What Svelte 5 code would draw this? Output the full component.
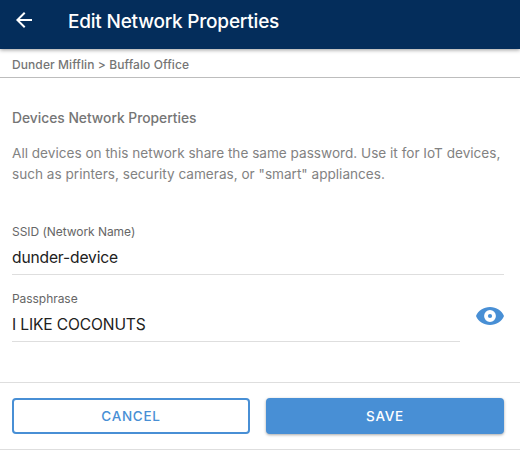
<script>
  let ssid = $state('dunder-device');
  let passphrase = $state('I LIKE COCONUTS');
  let visible = $state(true);
</script>

<div class="page">
  <header>
    <button class="back" aria-label="Back">
      <svg width="24" height="24" viewBox="0 0 24 24"><path fill="#fff" d="M20 11H7.83l5.59-5.59L12 4l-8 8 8 8 1.41-1.41L7.83 13H20v-2z" /></svg>
    </button>
    <h1>Edit Network Properties</h1>
  </header>
  <nav><span>Dunder Mifflin &gt; Buffalo Office</span></nav>
  <main>
    <h2>Devices Network Properties</h2>
    <p>All devices on this network share the same password. Use it for IoT devices,<br />such as printers, security cameras, or "smart" appliances.</p>
    <label class="field">
      <span class="lab">SSID (Network Name)</span>
      <input bind:value={ssid} spellcheck="false" />
    </label>
    <div class="row">
      <label class="field">
        <span class="lab">Passphrase</span>
        <input type={visible ? 'text' : 'password'} bind:value={passphrase} spellcheck="false" />
      </label>
      <button class="eye" aria-label="Toggle passphrase" onclick={() => (visible = !visible)}>
        <svg width="28" height="18" viewBox="0 0 28 18">
          <path fill="#488fd5" fill-rule="evenodd" d="M14 0C7.6 0 2.2 3.7 0 9c2.2 5.300 7.600 9 14 9s11.800-3.700 14-9C25.800 3.700 20.400 0 14 0zM14 3.100a5.900 5.900 0 1 1 0 11.800a5.900 5.900 0 1 1 0-11.800z" />
          <circle cx="14" cy="9" r="2.100" fill="#488fd5" />
        </svg>
      </button>
    </div>
  </main>
  <footer>
    <button class="btn cancel">CANCEL</button>
    <button class="btn save">SAVE</button>
  </footer>
</div>

<style>
  .page {
    width: 520px;
    height: 460px;
    background: #fff;
    font-family: Inter, 'Liberation Sans', sans-serif;
    display: flex;
    flex-direction: column;
    overflow: hidden;
  }
  .page * { box-sizing: border-box; }
  button { font-family: inherit; cursor: pointer; padding: 0; border: 0; background: none; }
  svg { display: block; }
  header {
    height: 49px;
    flex: none;
    background: #042d5b;
    display: flex;
    align-items: flex-start;
    padding: 8px 12px 0;
    box-shadow: 0 1px 4px rgba(0, 0, 0, 0.4);
    z-index: 1;
  }
  .back { width: 24px; margin-right: 32px; }
  h1 { margin: 2px 0 0; color: #fff; font-size: 19px; font-weight: 500; line-height: 24px; letter-spacing: -0.21px; white-space: nowrap; }
  nav {
    height: 29px;
    flex: none;
    border-bottom: 1px solid #bdbdbd;
    padding: 2px 12px 0;
    font-size: 12px;
    line-height: 28px;
    font-weight: 500;
    letter-spacing: 0.09px;
    color: #757575;
    white-space: nowrap;
  }
  main { padding: 30px 16px 0 12px; height: 304px; flex: none; }
  h2 { margin: 0; font-size: 13.8px; line-height: 20px; font-weight: 500; color: #757575; }
  p { margin: 15px 0 0; font-size: 13.6px; line-height: 21px; color: #828282; white-space: nowrap; }
  .field { display: flex; flex-direction: column; height: 51px; flex: 1; border-bottom: 1px solid #dedede; }
  main > .field { margin-top: 39px; }
  .lab { font-size: 12px; line-height: 16px; letter-spacing: -0.05px; color: #666; }
  input {
    width: 100%;
    height: 24px;
    margin: 6px 0 0;
    padding: 0;
    border: 0;
    outline: 0;
    background: transparent;
    font: 400 15.6px/24px Inter, 'Liberation Sans', sans-serif;
    letter-spacing: -0.15px;
    color: #212121;
  }
  .row { display: flex; gap: 16px; margin-top: 16px; }
  .eye { width: 28px; height: 18px; margin-top: 16px; }
  footer {
    height: 68px;
    flex: none;
    border: solid #dedede;
    border-width: 1px 0;
    padding: 15px 16px 0 12px;
    display: flex;
    gap: 16px;
  }
  .btn {
    flex: 1;
    height: 36px;
    border: 2px solid #488fd5;
    border-radius: 4px;
    padding-bottom: 1px;
    font-size: 13.5px;
    font-weight: 450;
    letter-spacing: 0.7px;
  }
  .cancel { color: #488fd5; }
  .save { background: #488fd5; color: #fff; box-shadow: 0 1px 3px rgba(0, 0, 0, 0.35); }
</style>
